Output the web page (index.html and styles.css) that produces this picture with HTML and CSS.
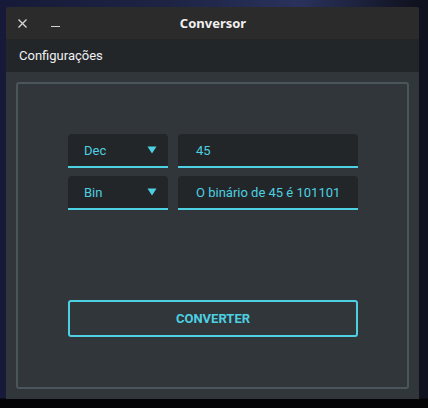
FILE: index.html
```html
<!DOCTYPE html>
<html lang="pt">
<head>
<meta charset="utf-8">
<title>Conversor</title>
<link rel="stylesheet" href="styles.css">
</head>
<body>
<div class="window">
  <div class="titlebar">
    <div class="controls">
      <svg class="icon-close" width="9" height="9" viewBox="0 0 9 9"><path d="M0.5 0.5 L8.5 8.5 M8.5 0.5 L0.5 8.5" stroke="#d8d8d8" stroke-width="1.3" fill="none"/></svg>
      <span class="icon-min"></span>
    </div>
    <div class="title">Conversor</div>
  </div>
  <div class="menubar"><span class="menu-item">Configurações</span></div>
  <div class="content">
    <div class="frame">
      <div class="rows">
        <div class="row">
          <div class="field combo"><span>Dec</span><svg width="10" height="8" viewBox="0 0 10 8"><polygon points="0.5,0.5 9.5,0.5 5,7.5" fill="#4dd0e1"/></svg></div>
          <div class="field input"><span>45</span></div>
        </div>
        <div class="row">
          <div class="field combo"><span>Bin</span><svg width="10" height="8" viewBox="0 0 10 8"><polygon points="0.5,0.5 9.5,0.5 5,7.5" fill="#4dd0e1"/></svg></div>
          <div class="field input"><span>O binário de 45 é 101101</span></div>
        </div>
      </div>
      <button class="btn">CONVERTER</button>
    </div>
  </div>
</div>
</body>
</html>
```
FILE: styles.css
```css
html, body {
  margin: 0;
  height: 408px;
  overflow: hidden;
}
body {
  background:
    linear-gradient(180deg, transparent 0, transparent 398px, #050507 399px),
    linear-gradient(90deg, #161a38 0, #1d2444 40%, #2a325c 70%, #10121f 97%);
  padding: 7px 9px 9px 6px;
  box-sizing: border-box;
  font-family: Roboto, "Noto Sans", sans-serif;
}
.window {
  width: 413px;
  height: 392px;
  display: flex;
  flex-direction: column;
  border-radius: 3px 3px 0 0;
  overflow: hidden;
  background: #31363b;
}
.titlebar {
  height: 32px;
  background: #2b2b2b;
  position: relative;
  display: flex;
  align-items: center;
  justify-content: center;
}
.controls {
  position: absolute;
  left: 12px;
  top: 12px;
  display: flex;
  align-items: flex-start;
}
.icon-close {
  display: block;
}
.icon-min {
  display: block;
  width: 9px;
  height: 1px;
  background: #d0d0d0;
  margin-left: 24px;
  margin-top: 7px;
}
.title {
  font-family: "Noto Sans", sans-serif;
  font-weight: bold;
  font-size: 13px;
  color: #f0f0f0;
  margin-left: 1px;
}
.menubar {
  height: 33px;
  background: #232629;
  display: flex;
  align-items: center;
  padding-left: 13px;
}
.menu-item {
  font-family: Roboto, sans-serif;
  font-size: 13px;
  color: #eff0f1;
}
.content {
  flex: 1;
  padding: 10px;
  display: flex;
}
.frame {
  flex: 1;
  border: 2px solid #4b555c;
  border-radius: 3px;
  padding: 50px 49px 50px 50px;
  display: flex;
  flex-direction: column;
  justify-content: space-between;
}
.rows {
  display: flex;
  flex-direction: column;
  gap: 8px;
}
.row {
  display: flex;
  gap: 10px;
}
.field {
  height: 34px;
  box-sizing: border-box;
  background: #232629;
  border-bottom: 2px solid #4dd0e1;
  border-radius: 4px 4px 0 0;
  display: flex;
  align-items: center;
  color: #4dd0e1;
  font-size: 13px;
}
.combo {
  width: 100px;
  padding: 0 11px 0 16px;
  justify-content: space-between;
}
.combo svg {
  display: block;
}
.input {
  width: 180px;
  padding-left: 18px;
}
.btn {
  height: 37px;
  width: 290px;
  background: transparent;
  border: 2px solid #4dd0e1;
  border-radius: 3px;
  color: #4dd0e1;
  font-family: Roboto, sans-serif;
  font-weight: bold;
  font-size: 13px;
  padding: 0;
}
```
